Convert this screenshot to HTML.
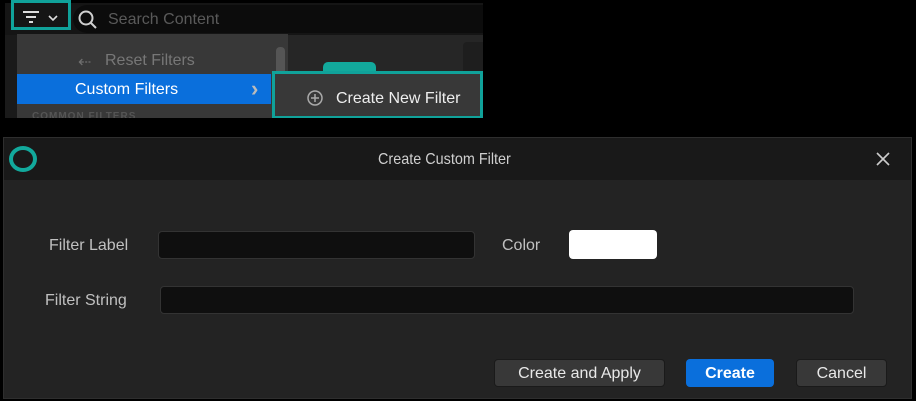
<!DOCTYPE html>
<html><head><style>
*{box-sizing:border-box;margin:0;padding:0}
body{width:916px;height:401px;background:#000;position:relative;overflow:hidden;font-family:"Liberation Sans",sans-serif;}
.a{position:absolute}
.t{position:absolute;white-space:nowrap;font-size:16px}
</style></head><body>
<div class="a" style="left:5px;top:3px;width:478px;height:116px;background:#1a1a1a"></div>
<div class="a" style="left:5px;top:3px;width:478px;height:32px;background:#151515"></div>
<div class="a" style="left:73px;top:5px;width:410px;height:28px;background:#0c0c0c;border-radius:14px 0 0 14px"></div>
<svg class="a" style="left:77px;top:9px" width="22" height="22" viewBox="0 0 22 22"><circle cx="9" cy="9" r="6.5" fill="none" stroke="#d0d0d0" stroke-width="2"/><path d="M14 14l5 5" stroke="#d0d0d0" stroke-width="2"/></svg>
<div class="t" style="left:108px;top:11px;color:#5a5a5a">Search Content</div>
<div class="a" style="left:11px;top:0;width:60px;height:30px;border:3px solid #10a29a"></div>
<svg class="a" style="left:22px;top:10px" width="40" height="16" viewBox="0 0 40 16"><path d="M1 2h16M4 7h10M7 12h4" stroke="#ddd" stroke-width="2"/><path d="M27 6l4 4 4-4" fill="none" stroke="#ddd" stroke-width="1.6"/></svg>
<div class="a" style="left:288px;top:35px;width:195px;height:84px;background:#262626"></div>
<div class="a" style="left:463px;top:42px;width:20px;height:40px;background:#1e1e1e;border-radius:4px 0 0 4px"></div>
<div class="a" style="left:323px;top:62px;width:53px;height:14px;background:#12a99c;border-radius:5px 5px 0 0"></div>
<div class="a" style="left:17px;top:34px;width:271px;height:85px;background:#383838"></div>
<div class="a" style="left:276px;top:47px;width:9px;height:30px;background:#555;border-radius:4px"></div>
<div class="t" style="left:78px;top:52px;color:#6e6e6e">⇠</div>
<div class="t" style="left:105px;top:52px;color:#777">Reset Filters</div>
<div class="a" style="left:17px;top:74px;width:254px;height:30px;background:#0a6fdc"></div>
<div class="t" style="left:75px;top:81px;color:#fff">Custom Filters</div>
<div class="t" style="left:251px;top:76px;color:#bbb;font-size:22px;font-weight:bold">›</div>
<div class="t" style="left:32px;top:111px;color:#555;font-size:10px;letter-spacing:1px;font-weight:bold">COMMON FILTERS</div>
<div class="a" style="left:272px;top:71px;width:211px;height:48px;border:3px solid #10a29a;background:#383838"></div>
<svg class="a" style="left:306px;top:89px" width="18" height="18" viewBox="0 0 18 18"><circle cx="9" cy="9" r="7" fill="none" stroke="#aaa" stroke-width="1.5"/><path d="M9 5v8M5 9h8" stroke="#aaa" stroke-width="1.5"/></svg>
<div class="t" style="left:336px;top:90px;color:#eee">Create New Filter</div>
<div class="a" style="left:0;top:118px;width:916px;height:19px;background:#000"></div>
<div class="a" style="left:3px;top:137px;width:909px;height:262px;background:#232323;border:1px solid #2e2e2e"></div>
<div class="a" style="left:4px;top:138px;width:907px;height:42px;background:#191919"></div>
<div class="a" style="left:9px;top:146px;width:28px;height:26px;border:4px solid #12a99c;border-radius:50%"></div>
<div class="t" style="left:378px;top:151px;color:#cfcfcf;transform:scaleX(.9);transform-origin:left">Create Custom Filter</div>
<svg class="a" style="left:876px;top:152px" width="14" height="14" viewBox="0 0 14 14"><path d="M1 1l12 12M13 1L1 13" stroke="#ccc" stroke-width="1.6"/></svg>
<div class="t" style="left:49px;top:237px;color:#c0c0c0">Filter Label</div>
<div class="a" style="left:158px;top:231px;width:317px;height:28px;background:#0f0f0f;border:1px solid #333;border-radius:4px"></div>
<div class="t" style="left:502px;top:237px;color:#c0c0c0">Color</div>
<div class="a" style="left:569px;top:230px;width:88px;height:29px;background:#fff;border-radius:4px"></div>
<div class="t" style="left:45px;top:292px;color:#c0c0c0">Filter String</div>
<div class="a" style="left:160px;top:286px;width:694px;height:28px;background:#0f0f0f;border:1px solid #333;border-radius:4px"></div>
<div class="a" style="left:494px;top:359px;width:171px;height:28px;background:#383838;border:1px solid #1a1a1a;border-radius:4px"></div>
<div class="t" style="left:494px;top:365px;width:171px;text-align:center;color:#e8e8e8">Create and Apply</div>
<div class="a" style="left:686px;top:359px;width:88px;height:28px;background:#0a6fdc;border-radius:4px"></div>
<div class="t" style="left:686px;top:365px;width:88px;text-align:center;color:#fff;font-weight:bold">Create</div>
<div class="a" style="left:796px;top:359px;width:91px;height:28px;background:#383838;border:1px solid #1a1a1a;border-radius:4px"></div>
<div class="t" style="left:796px;top:365px;width:91px;text-align:center;color:#e8e8e8">Cancel</div>
</body></html>
